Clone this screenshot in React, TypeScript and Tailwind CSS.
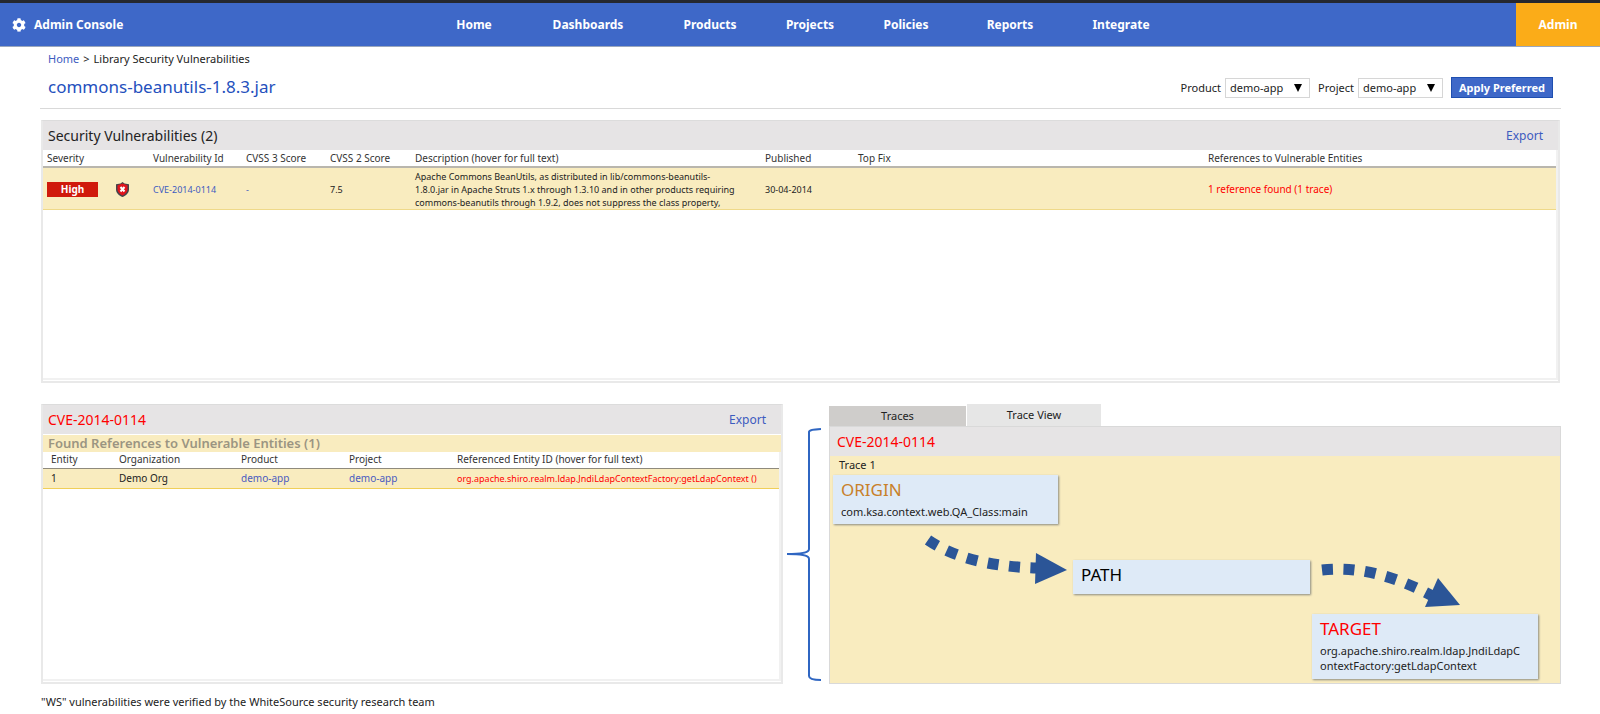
import { FaCog } from "react-icons/fa";

const navItems = [
  { label: "Home", width: "w-[88px]" },
  { label: "Dashboards", width: "w-[140px]" },
  { label: "Products", width: "w-[104px]" },
  { label: "Projects", width: "w-[96px]" },
  { label: "Policies", width: "w-[96px]" },
  { label: "Reports", width: "w-[112px]" },
  { label: "Integrate", width: "w-[110px]" },
];

const ShieldIcon = () => (
  <svg viewBox="0 0 26 30" className="w-[13px] h-[15px]" aria-label="Vulnerable" role="img">
    <path d="M13 0 L17 3 L26 4.5 V15 C26 22 20 27 13 30 C6 27 0 22 0 15 V4.5 L9 3 Z" fill="#44454b" />
    <path d="M13 3 L23 6.5 V15 C23 20 18 25 13 27 C8 25 3 20 3 15 V6.5 Z" fill="#e0141c" />
    <path d="M9 10 L17 19 M17 10 L9 19" stroke="#fff" strokeWidth="4" />
  </svg>
);

const BraceIcon = () => (
  <svg viewBox="0 0 34 256" preserveAspectRatio="none" className="w-[34px] h-full" fill="none" stroke="#2f66c2" strokeWidth="2">
    <path d="M34 1 C26 1.5 22 2 22 4 V121 C22 124 18 126 0 126 C18 126 22 128 22 131 V248 C22 251 26 252 34 252" />
  </svg>
);

const Select = ({ id, label }: { id: string; label: string }) => (
  <div className="flex items-center gap-1">
    <label htmlFor={id}>{label}</label>
    <div className="relative">
      <select
        id={id}
        className="appearance-none w-[85px] h-5 border border-[#d6d6d6] bg-white pl-1 pr-5 text-[11px] leading-[18px]"
      >
        <option>demo-app</option>
      </select>
      <svg viewBox="0 0 8 8" className="absolute right-2 top-1.5 size-2 pointer-events-none">
        <path d="M0 0 H8 L4 8 Z" fill="#000" />
      </svg>
    </div>
  </div>
);

const Header = () => (
  <header className="flex h-[47px] border-t-[3px] border-t-[#25282f] border-b border-b-[#9aa7bd] bg-[#3e68c8] text-white text-xs font-bold">
    <div className="flex flex-1 items-center gap-2 pl-3">
      <FaCog className="size-3.5" />
      <span>Admin Console</span>
    </div>
    <nav className="flex items-center pr-1.5">
      {navItems.map((item) => (
        <a key={item.label} href="#" className={`${item.width} text-center`}>
          {item.label}
        </a>
      ))}
    </nav>
    <div className="flex flex-1 justify-end">
      <a href="#" className="flex w-[84px] items-center justify-center bg-[#fbac18]">
        Admin
      </a>
    </div>
  </header>
);

const Vulnerabilities = () => (
  <section className="flex h-[263px] flex-col border-2 border-[#e9e9e9] border-t-[#dcdcdc] border-t">
    <div className="flex h-[29px] items-center justify-between bg-[#e6e4e5] pl-[5px] pr-[15px]">
      <h2 className="text-sm">Security Vulnerabilities (2)</h2>
      <a href="#" className="text-xs text-[#3d5bbf]">
        Export
      </a>
    </div>
    <div className="mb-px flex-1 border-r-2 border-b-2 border-[#f1f1f1]">
      <table className="w-full table-fixed text-left text-[9px] leading-[13px]">
        <colgroup>
          <col className="w-[110px]" />
          <col className="w-[93px]" />
          <col className="w-[84px]" />
          <col className="w-[85px]" />
          <col className="w-[350px]" />
          <col className="w-[93px]" />
          <col />
          <col className="w-[348px]" />
        </colgroup>
        <thead>
          <tr className="h-[17px] border-b-2 border-[#b9b6ad] text-[10px] text-[#333] [&>th]:font-normal">
            <th className="pl-1">Severity</th>
            <th>Vulnerability Id</th>
            <th>CVSS 3 Score</th>
            <th>CVSS 2 Score</th>
            <th>Description (hover for full text)</th>
            <th>Published</th>
            <th>Top Fix</th>
            <th>References to Vulnerable Entities</th>
          </tr>
        </thead>
        <tbody>
          <tr className="h-[42px] border-b border-[#efd989] bg-[#f9ecbf] [&>td]:pt-0.5">
            <td className="pl-1">
              <div className="flex items-center gap-[18px]">
                <span className="w-[51px] h-[15px] bg-[#d01a0c] text-center text-[10px] font-bold leading-[15px] text-white">
                  High
                </span>
                <ShieldIcon />
              </div>
            </td>
            <td>
              <a href="#" className="text-[#3d5bbf]">CVE-2014-0114</a>
            </td>
            <td className="text-[#3d5bbf]">-</td>
            <td>7.5</td>
            <td className="whitespace-nowrap">
              Apache Commons BeanUtils, as distributed in lib/commons-beanutils-
              <br />
              1.8.0.jar in Apache Struts 1.x through 1.3.10 and in other products requiring
              <br />
              commons-beanutils through 1.9.2, does not suppress the class property,
            </td>
            <td>30-04-2014</td>
            <td></td>
            <td>
              <a href="#" className="text-[10px] text-[#f00]">1 reference found (1 trace)</a>
            </td>
          </tr>
        </tbody>
      </table>
    </div>
  </section>
);

const References = () => (
  <section className="flex h-[280px] flex-col border-2 border-[#e9e9e9] border-t border-t-[#dcdcdc]">
    <div className="flex h-[29px] items-center justify-between bg-[#e6e4e5] pl-[5px] pr-[15px]">
      <h2 className="text-sm text-[#f00]">CVE-2014-0114</h2>
      <a href="#" className="text-xs text-[#3d5bbf]">
        Export
      </a>
    </div>
    <h3 className="mt-px h-[17px] bg-[#f9ecbf] pl-[5px] text-[13px] leading-[17px] font-semibold text-[#9b9582]">
      Found References to Vulnerable Entities (1)
    </h3>
    <div className="mb-px flex-1 border-r-2 border-b-2 border-[#f1f1f1]">
      <table className="w-full table-fixed text-left text-[10px] leading-[13px]">
        <colgroup>
          <col className="w-[76px]" />
          <col className="w-[122px]" />
          <col className="w-[108px]" />
          <col className="w-[108px]" />
          <col />
        </colgroup>
        <thead>
          <tr className="h-4 border-b border-[#8f8a7c] text-[#333] [&>th]:font-normal">
            <th className="pl-2">Entity</th>
            <th>Organization</th>
            <th>Product</th>
            <th>Project</th>
            <th>Referenced Entity ID (hover for full text)</th>
          </tr>
        </thead>
        <tbody>
          <tr className="h-5 border-b border-[#f0cf58] bg-[#f9ecbf]">
            <td className="pl-2">1</td>
            <td>Demo Org</td>
            <td>
              <a href="#" className="text-[#4a5bc0]">demo-app</a>
            </td>
            <td>
              <a href="#" className="text-[#4a5bc0]">demo-app</a>
            </td>
            <td className="whitespace-nowrap text-[9px] text-[#f00]">
              org.apache.shiro.realm.ldap.JndiLdapContextFactory:getLdapContext ()
            </td>
          </tr>
        </tbody>
      </table>
    </div>
  </section>
);

const nodeClass = "absolute bg-[#deeaf7] pl-2 text-[11px] leading-[15px] shadow-[1px_1px_2px_#8a8a80]";
const nodeTitleClass = "pt-[3px] pb-0.5 text-[17px] leading-6";

const TraceView = () => (
  <section className="flex h-[280px] flex-col">
    <div className="flex items-end text-[11px]">
      <button className="h-5 w-[137px] bg-[#cfcdcb]">Traces</button>
      <button className="ml-px h-[22px] w-[134px] bg-[#e6e6e6]">Trace View</button>
    </div>
    <div className="flex flex-1 flex-col border border-[#d9d9d9]">
      <h2 className="h-[29px] bg-[#e6e4e5] pl-[7px] text-sm leading-[30px] text-[#f00]">
        CVE-2014-0114
      </h2>
      <div className="relative flex-1 bg-[#f9ecbf]">
        <p className="pl-[9px] text-[11px] leading-[18px]">Trace 1</p>
        <div className={`${nodeClass} left-[3px] top-[19px] h-[49px] w-[225px]`}>
          <h3 className={`${nodeTitleClass} text-[#c8802a]`}>ORIGIN</h3>
          <p>com.ksa.context.web.QA_Class:main</p>
        </div>
        <div className={`${nodeClass} left-[243px] top-[104px] h-[34px] w-[237px]`}>
          <h3 className={`${nodeTitleClass} text-black`}>PATH</h3>
        </div>
        <div className={`${nodeClass} left-[482px] top-[158px] h-[65px] w-[226px]`}>
          <h3 className={`${nodeTitleClass} text-[#f00]`}>TARGET</h3>
          <p>
            org.apache.shiro.realm.ldap.JndiLdapC
            <br />
            ontextFactory:getLdapContext
          </p>
        </div>
        <svg viewBox="0 0 640 160" className="absolute left-0 top-0 h-[160px] w-[640px] pointer-events-none">
          <g fill="none" stroke="#2b5597" strokeWidth="11">
            <path d="M98 84 Q136 110 207 112" strokeDasharray="11 10.5" />
            <path d="M492 114 Q545 108 606 142" strokeDasharray="11 10.5" />
          </g>
          <g fill="#2b5597">
            <path d="M206 97 L237 114 L205 128 Z" />
            <path d="M608 122 L630 149 L595 151 Z" />
          </g>
        </svg>
      </div>
    </div>
  </section>
);

const App = () => {
  return (
    <div className="font-['Noto_Sans',sans-serif] text-[#222]">
      <Header />
      <main className="pl-10 pr-[39px]">
        <div className="flex h-[62px] justify-between border-b border-[#d9d9d9]">
          <div className="pl-2">
            <p className="flex gap-1 pt-[3px] text-[11px] leading-[18px]">
              <a href="#" className="text-[#3d5bbf]">Home</a>
              <span>&gt;</span>
              <span>Library Security Vulnerabilities</span>
            </p>
            <h1 className="text-[17px] leading-[38px] text-[#2450bd]">commons-beanutils-1.8.3.jar</h1>
          </div>
          <form className="flex items-end gap-2 pb-2.5 pr-2 text-[11px]">
            <Select id="product" label="Product" />
            <Select id="project" label="Project" />
            <button type="button" className="h-[21px] w-[102px] bg-[#3e68c8] border border-[#1f4fb0] text-[11px] leading-[18px] font-bold text-white">
              Apply Preferred
            </button>
          </form>
        </div>
        <div className="mx-px mt-[11px]">
          <Vulnerabilities />
        </div>
        <div className="mt-[21px] grid grid-cols-[742fr_46px_732fr] pl-px">
          <References />
          <div className="flex justify-start pl-1 pt-6 pb-0.5">
            <BraceIcon />
          </div>
          <TraceView />
        </div>
        <p className="pt-1.5 pl-px text-[11px] leading-5">
          "WS" vulnerabilities were verified by the WhiteSource security research team
        </p>
      </main>
    </div>
  );
};

export default App;
